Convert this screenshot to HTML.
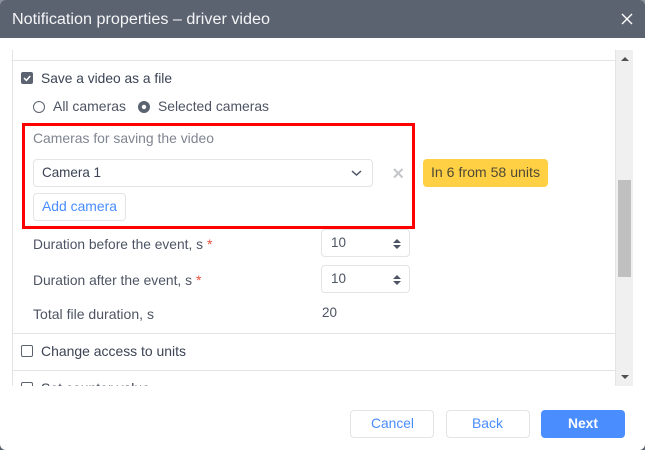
<!DOCTYPE html>
<html><head><meta charset="utf-8"><style>
html,body{margin:0;padding:0;background:#fff;width:645px;height:450px;overflow:hidden}
svg{display:block}
text{font-family:"Liberation Sans",sans-serif;font-size:14px;fill:#3b4354}
</style></head><body>
<svg width="645" height="450" viewBox="0 0 645 450" xmlns="http://www.w3.org/2000/svg">
<rect width="645" height="450" fill="#5b6270"/>
<rect y="10" width="645" height="440" rx="6" fill="#fff"/>
<path d="M0 0H645V38H0Z" fill="#5b6270"/>
<path d="M0 6A6 6 0 0 1 6 0H0Z M645 6A6 6 0 0 0 639 0H645Z" fill="#8d929b"/>
<text x="12" y="24" style="font-size:15.5px;fill:#f4f5f6" textLength="258" lengthAdjust="spacingAndGlyphs">Notification properties – driver video</text>
<path d="M622 14L632 24M632 14L622 24" stroke="#fff" stroke-width="1.4"/>

<rect x="12" y="50" width="1" height="336" fill="#e3e4e6"/>
<rect x="13" y="60" width="602" height="1" fill="#e3e4e6"/>
<rect x="13" y="333" width="602" height="1" fill="#e3e4e6"/>
<rect x="13" y="370" width="602" height="1" fill="#e3e4e6"/>
<rect x="615" y="50" width="18" height="336" fill="#f0f0f0"/>
<rect x="615" y="50" width="1" height="336" fill="#e3e4e6"/>
<rect x="618" y="180" width="13" height="97" fill="#c0c0c0"/>
<path d="M621 61L625 57L629 61Z" fill="#505050"/>
<path d="M621 375L625 379L629 375Z" fill="#505050"/>

<rect x="21" y="72" width="12" height="12" rx="2" fill="#5b6270"/>
<path d="M24 78L26.4 80.4L30.2 76" fill="none" stroke="#fff" stroke-width="1.5"/>
<text x="41" y="83" textLength="131" lengthAdjust="spacingAndGlyphs">Save a video as a file</text>

<circle cx="39" cy="107" r="5.5" fill="#fff" stroke="#5b6270"/>
<text x="53" y="111" style="fill:#4d5463" textLength="73" lengthAdjust="spacingAndGlyphs">All cameras</text>
<circle cx="144" cy="107" r="6" fill="#5b6270"/>
<circle cx="144" cy="107" r="2.2" fill="#fff"/>
<text x="158" y="111" style="fill:#4d5463" textLength="111" lengthAdjust="spacingAndGlyphs">Selected cameras</text>

<text x="33" y="143" style="fill:#7f8591" textLength="181" lengthAdjust="spacingAndGlyphs">Cameras for saving the video</text>

<rect x="33.500" y="159.500" width="339" height="27" rx="3.500" fill="#fff" stroke="#e3e4e6"/>
<text x="42" y="177" textLength="59" lengthAdjust="spacingAndGlyphs">Camera 1</text>
<path d="M352 171L356.500 175L361 171" fill="none" stroke="#4d5463" stroke-width="1.5"/>
<path d="M394 169L402.500 177.500M402.500 169L394 177.500" stroke="#c4c6ca" stroke-width="2"/>

<rect x="423" y="159" width="125" height="28" rx="4" fill="#ffd044"/>
<text x="431" y="177" style="fill:#4f4a35" textLength="109" lengthAdjust="spacingAndGlyphs">In 6 from 58 units</text>

<rect x="33.500" y="193.500" width="92" height="27" rx="3.500" fill="#fff" stroke="#e3e4e6"/>
<text x="42" y="211" style="fill:#4a8dff" textLength="75" lengthAdjust="spacingAndGlyphs">Add camera</text>

<rect x="321.500" y="229.500" width="88" height="27" rx="3.500" fill="#fff" stroke="#e3e4e6"/>
<text x="331" y="247" style="fill:#4d5463" textLength="15" lengthAdjust="spacingAndGlyphs">10</text>
<path d="M393 243L397 239L401 243ZM393 245L397 249L401 245Z" fill="#4d5463"/>
<rect x="321.500" y="265.500" width="88" height="27" rx="3.500" fill="#fff" stroke="#e3e4e6"/>
<text x="331" y="283" style="fill:#4d5463" textLength="15" lengthAdjust="spacingAndGlyphs">10</text>
<path d="M393 279L397 275L401 279ZM393 281L397 285L401 281Z" fill="#4d5463"/>

<rect x="23.500" y="124.500" width="390" height="103" fill="none" stroke="#f00" stroke-width="3"/>

<text x="33" y="249" style="fill:#4d5463" textLength="170" lengthAdjust="spacingAndGlyphs">Duration before the event, s</text>
<text x="207" y="249" style="fill:#e8503a">*</text>
<text x="33" y="285" style="fill:#4d5463" textLength="159" lengthAdjust="spacingAndGlyphs">Duration after the event, s</text>
<text x="196" y="285" style="fill:#e8503a">*</text>
<text x="33" y="319" style="fill:#4d5463" textLength="121" lengthAdjust="spacingAndGlyphs">Total file duration, s</text>
<text x="322" y="317" style="fill:#4d5463" textLength="15" lengthAdjust="spacingAndGlyphs">20</text>

<rect x="21.500" y="345.500" width="11" height="11" rx="1.500" fill="#fff" stroke="#5b6270"/>
<text x="41" y="356" textLength="145" lengthAdjust="spacingAndGlyphs">Change access to units</text>
<rect x="21.500" y="382.500" width="11" height="11" rx="1.500" fill="#fff" stroke="#5b6270"/>
<text x="41" y="393" textLength="109" lengthAdjust="spacingAndGlyphs">Set counter value</text>
<rect x="0" y="386" width="645" height="24" fill="#fff"/>

<rect x="350.500" y="410.500" width="83" height="27" rx="3.500" fill="#fff" stroke="#e3e4e6"/>
<text x="371" y="428" style="fill:#4a8dff" textLength="43" lengthAdjust="spacingAndGlyphs">Cancel</text>
<rect x="446.500" y="410.500" width="83" height="27" rx="3.500" fill="#fff" stroke="#e3e4e6"/>
<text x="472" y="428" style="fill:#4a8dff" textLength="31" lengthAdjust="spacingAndGlyphs">Back</text>
<rect x="541" y="410" width="84" height="28" rx="4" fill="#4a8dff"/>
<text x="568" y="428" style="fill:#fff;font-weight:bold" textLength="30" lengthAdjust="spacingAndGlyphs">Next</text>
</svg>
</body></html>
